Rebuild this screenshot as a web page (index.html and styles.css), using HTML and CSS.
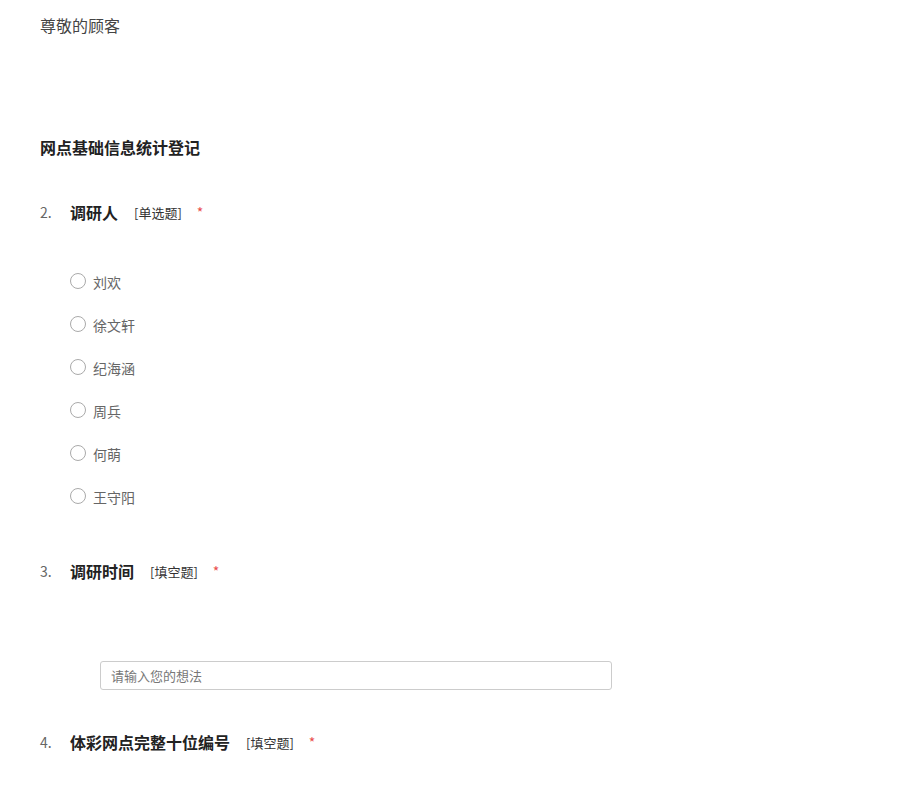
FILE: index.html
```html
<!DOCTYPE html>
<html lang="zh-CN">
<head>
    <meta charset="UTF-8">
    <meta name="viewport" content="width=device-width, initial-scale=1.0">
    <title>网点基础信息统计登记</title>
    <link rel="stylesheet" href="styles.css">
</head>
<body>

<div class="survey">
    <p class="greeting">尊敬的顾客</p>

    <h2 class="section-title">网点基础信息统计登记</h2>

    <div class="question">
        <div class="question-head">
            <span class="q-num">2.</span>
            <span class="q-title">调研人</span>
            <span class="q-type">[单选题]</span>
            <span class="required">*</span>
        </div>
        <div class="options">
            <label class="option"><input type="radio" name="q2"><span class="radio"></span>刘欢</label>
            <label class="option"><input type="radio" name="q2"><span class="radio"></span>徐文轩</label>
            <label class="option"><input type="radio" name="q2"><span class="radio"></span>纪海涵</label>
            <label class="option"><input type="radio" name="q2"><span class="radio"></span>周兵</label>
            <label class="option"><input type="radio" name="q2"><span class="radio"></span>何萌</label>
            <label class="option"><input type="radio" name="q2"><span class="radio"></span>王守阳</label>
        </div>
    </div>

    <div class="question q-text">
        <div class="question-head">
            <span class="q-num">3.</span>
            <span class="q-title">调研时间</span>
            <span class="q-type">[填空题]</span>
            <span class="required">*</span>
        </div>
        <input type="text" class="answer" placeholder="请输入您的想法">
    </div>

    <div class="question q-last">
        <div class="question-head">
            <span class="q-num">4.</span>
            <span class="q-title">体彩网点完整十位编号</span>
            <span class="q-type">[填空题]</span>
            <span class="required">*</span>
        </div>
    </div>
</div>

</body>
</html>
```

FILE: styles.css
```css
body {
    margin: 0;
    background-color: #fff;
    font-family: "Microsoft YaHei", "Noto Sans CJK SC", "Noto Sans", sans-serif;
    color: #333;
}

.survey {
    padding: 15px 40px 40px;
}

.greeting {
    margin: 0;
    font-size: 16px;
    line-height: 20px;
    color: #444;
}

.section-title {
    margin: 102px 0 0;
    font-size: 16px;
    line-height: 20px;
    font-weight: bold;
    color: #222;
}

.question {
    margin-top: 43px;
}

.question-head {
    display: flex;
    align-items: center;
    height: 24px;
}

.q-num {
    width: 30px;
    font-size: 14px;
    color: #666;
}

.q-title {
    font-size: 16px;
    font-weight: bold;
    color: #222;
    margin-right: 16px;
}

.q-type {
    font-size: 13px;
    color: #333;
    margin-right: 15px;
}

.required {
    font-size: 14px;
    color: #e94d4d;
}

.options {
    display: flex;
    flex-direction: column;
    gap: 21px;
    margin-top: 47px;
    padding-left: 30px;
}

.option {
    display: flex;
    align-items: center;
    height: 22px;
    font-size: 14px;
    color: #666;
    cursor: pointer;
}

.option input {
    display: none;
}

.radio {
    width: 14px;
    height: 14px;
    border: 1px solid #aaa;
    border-radius: 50%;
    margin-right: 7px;
    margin-top: -2px;
}

.option input:checked + .radio {
    border: 4px solid #1e88e5;
    width: 8px;
    height: 8px;
}

.q-text {
    margin-top: 51px;
}

.answer {
    display: block;
    box-sizing: border-box;
    width: 512px;
    height: 29px;
    margin: 78px 0 0 60px;
    padding: 0 10px;
    border: 1px solid #ccc;
    border-radius: 3px;
    font-family: inherit;
    font-size: 13px;
    color: #333;
}

.answer::placeholder {
    color: #777;
}

.q-last {
    margin-top: 40px;
}
```
